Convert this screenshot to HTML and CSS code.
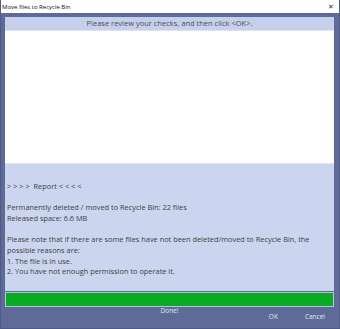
FILE: index.html
```html
<!DOCTYPE html>
<html lang="en">
<head>
  <meta charset="UTF-8">
  <title>Move files to Recycle Bin</title>
  <link rel="stylesheet" href="styles.css">
</head>
<body>
  <div class="window">
    <div class="title_bar">
      <span class="title">Move files to Recycle Bin</span>
      <span class="close_btn">&#x2715;</span>
    </div>
    <div class="window_body">
      <div class="panel">
        <div class="panel_header">Please review your checks, and then click &lt;OK&gt;.</div>
        <div class="list_area"></div>
        <div class="report">
          <p class="line">&nbsp;</p>
          <p class="line">&gt; &gt; &gt; &gt;&nbsp; Report &lt; &lt; &lt; &lt;</p>
          <p class="line">&nbsp;</p>
          <p class="line">Permanently deleted / moved to Recycle Bin: 22 files</p>
          <p class="line">Released space: 6.6 MB</p>
          <p class="line">&nbsp;</p>
          <p class="line">Please note that if there are some files have not been deleted/moved to Recycle Bin, the</p>
          <p class="line">possible reasons are:</p>
          <p class="line">1. The file is in use.</p>
          <p class="line">2. You have not enough permission to operate it.</p>
        </div>
      </div>
      <div class="progress_bar"></div>
      <div class="status">Done!</div>
      <div class="buttons">
        <span class="btn">OK</span>
        <span class="btn">Cancel</span>
      </div>
    </div>
  </div>
</body>
</html>
```

FILE: styles.css
```css
* {
	box-sizing: border-box;
}

body {
	margin: 0;
	width: 340px;
	height: 329px;
	font-family: "Open Sans", "Noto Sans", sans-serif;
	overflow: hidden;
}

.window {
	width: 340px;
	height: 329px;
	background-color: #5e6a98;
	border: 1px solid #4f5a86;
	border-top: none;
	display: flex;
	flex-direction: column;
}

.title_bar {
	height: 13px;
	background-color: white;
	display: flex;
	align-items: center;
	justify-content: space-between;
	padding: 0 5px 0 1px;
}

.title {
	font-size: 6px;
	color: #111;
}

.close_btn {
	font-size: 7px;
	color: #333;
}

.window_body {
	flex: 1;
	padding: 4px 5px 0 4px;
	display: flex;
	flex-direction: column;
}

.panel {
	display: flex;
	flex-direction: column;
	background-color: #cbd5ef;
}

.panel_header {
	height: 14px;
	background-color: #c6d0ed;
	border-bottom: 1px solid #dde4f6;
	color: #4e4e4e;
	font-size: 7.5px;
	text-align: center;
	line-height: 13px;
}

.list_area {
	height: 133px;
	background-color: white;
	border-bottom: 1px solid #dfe5f5;
}

.report {
	height: 127px;
	padding: 6px 2px 0;
	color: #3f3f3f;
	font-size: 7.4px;
}

.line {
	margin: 0;
	line-height: 10.7px;
	white-space: nowrap;
}

.progress_bar {
	height: 15px;
	margin-top: 1px;
	background-color: #0aab24;
	border: 1px solid #b9c2dc;
}

.status {
	text-align: center;
	color: #e3e7f2;
	font-size: 6.5px;
	line-height: 8px;
}

.buttons {
	display: flex;
	justify-content: flex-end;
	gap: 27px;
	padding-right: 9px;
	line-height: 8px;
	margin-top: -2px;
}

.btn {
	color: #e3e7f2;
	font-size: 6.5px;
}
```
